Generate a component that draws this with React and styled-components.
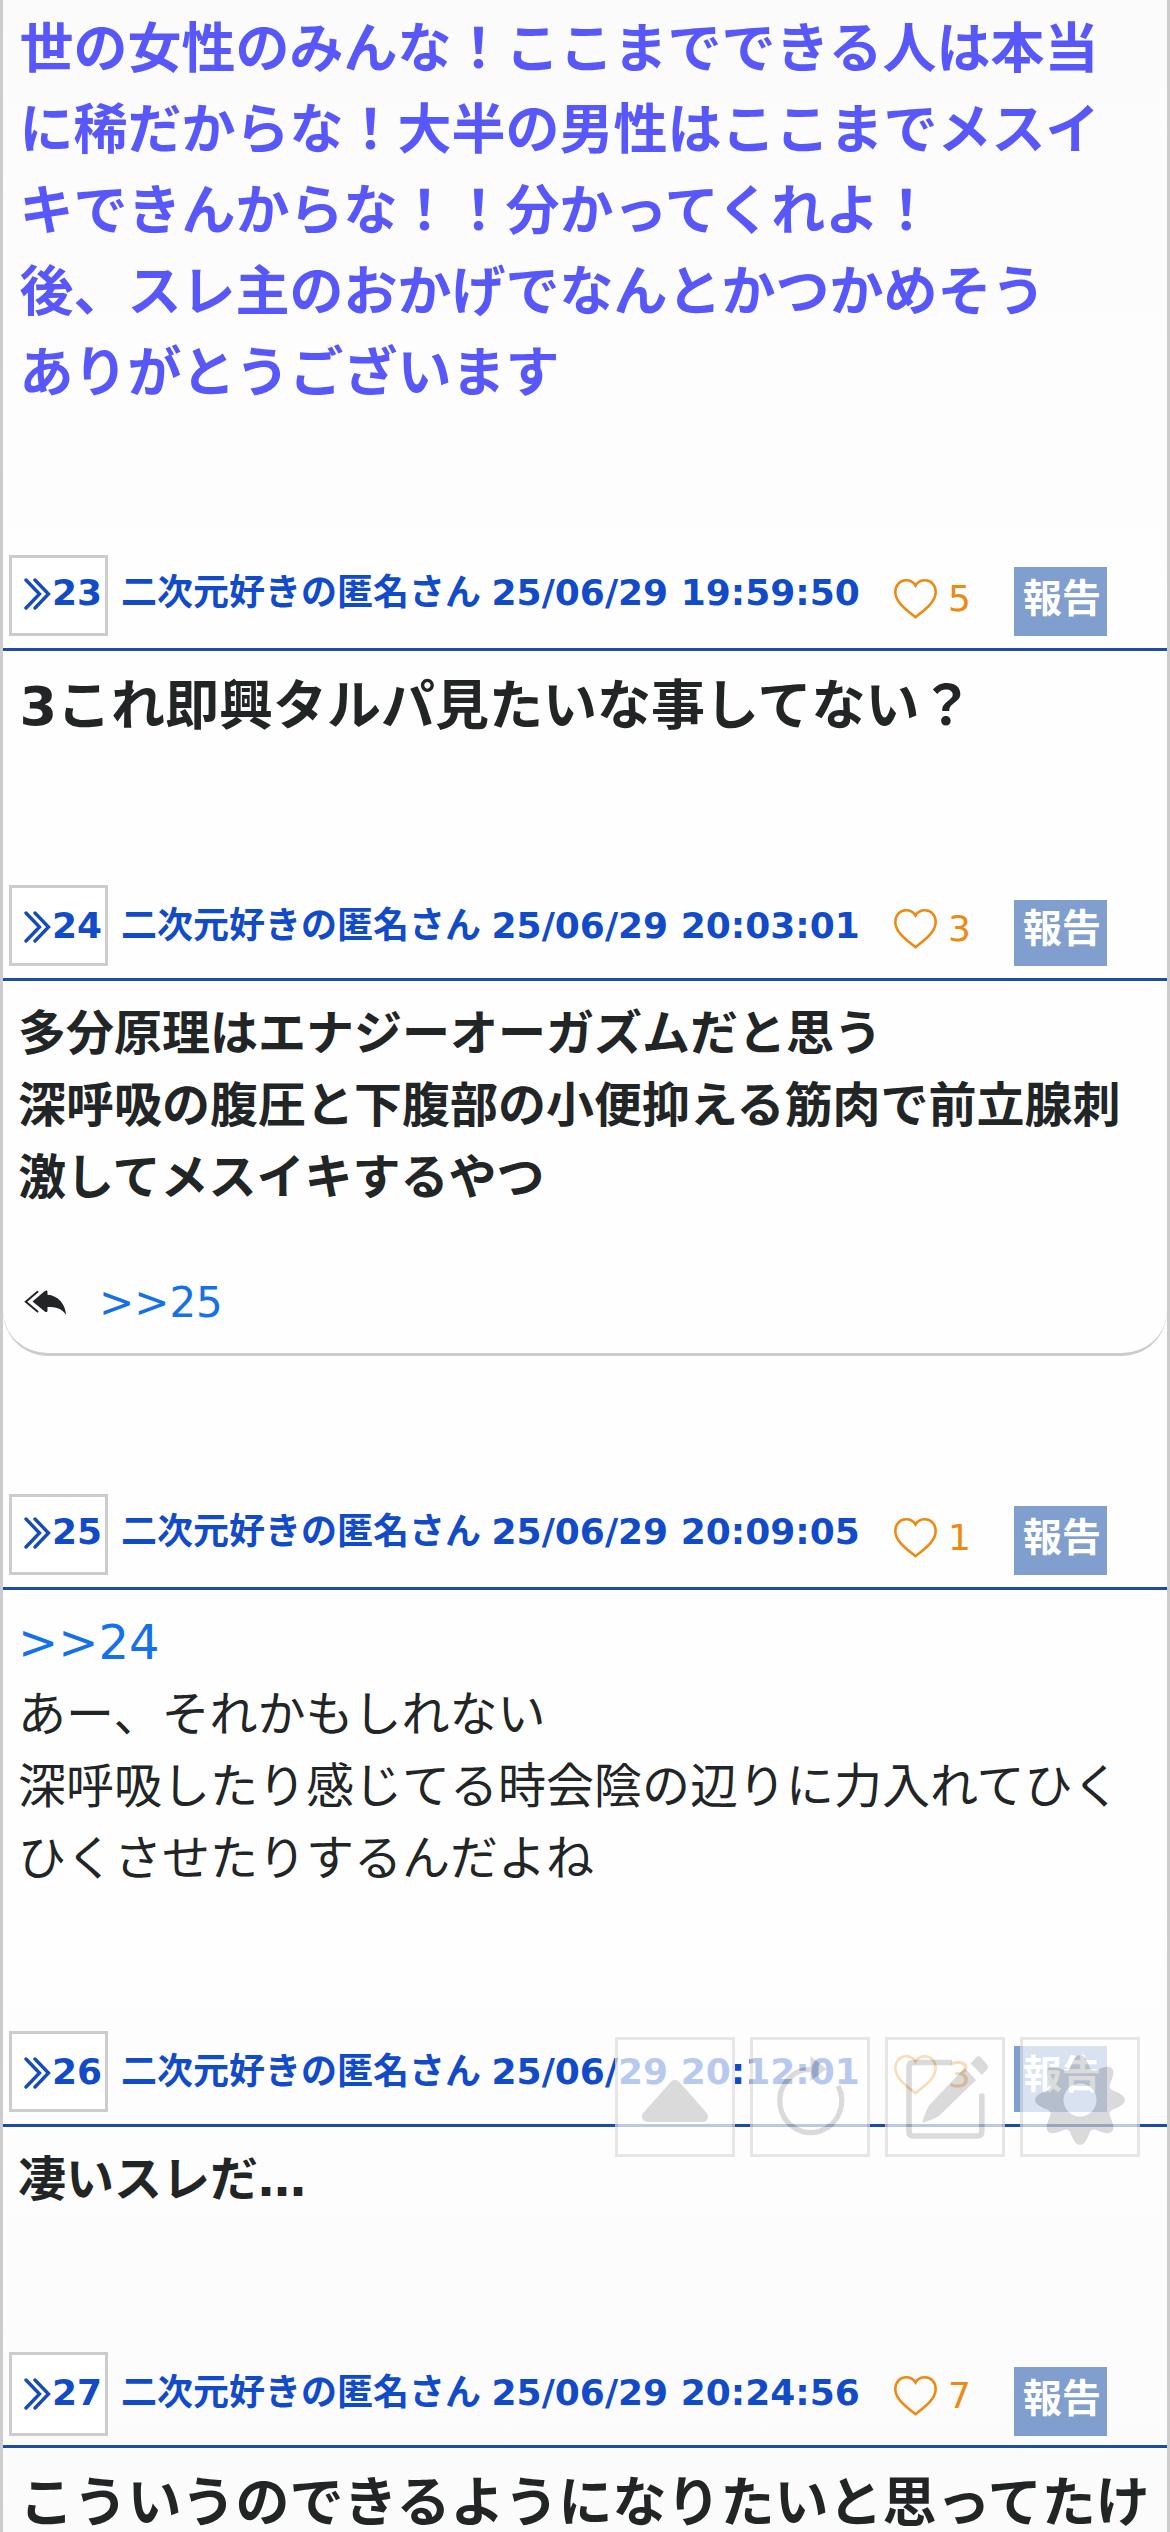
import styled, { createGlobalStyle } from "styled-components";

const posts = [
  {
    id: 23,
    date: "25/06/29 19:59:50",
    likes: 5,
    large: true,
    bold: true,
    drop: 0,
    report: { height: 69, pad: 5 },
    lines: ["3これ即興タルパ見たいな事してない？"],
  },
  {
    id: 24,
    date: "25/06/29 20:03:01",
    likes: 3,
    bold: true,
    drop: 3,
    report: { height: 66, pad: 2 },
    lines: [
      "多分原理はエナジーオーガズムだと思う",
      "深呼吸の腹圧と下腹部の小便抑える筋肉で前立腺刺",
      "激してメスイキするやつ",
    ],
    reply: 25,
  },
  {
    id: 25,
    date: "25/06/29 20:09:05",
    likes: 1,
    drop: 0,
    report: { height: 69, pad: 5 },
    anchor: 24,
    lines: [
      "あー、それかもしれない",
      "深呼吸したり感じてる時会陰の辺りに力入れてひく",
      "ひくさせたりするんだよね",
    ],
  },
  {
    id: 26,
    date: "25/06/29 20:12:01",
    likes: 3,
    bold: true,
    drop: 3,
    report: { height: 66, pad: 2 },
    lines: ["凄いスレだ…"],
  },
  {
    id: 27,
    date: "25/06/29 20:24:56",
    likes: 7,
    large: true,
    bold: true,
    drop: 3,
    tall: true,
    report: { height: 69, pad: 5 },
    lines: ["こういうのできるようになりたいと思ってたけ"],
  },
];

function gearPath() {
  let d = "";
  for (let a = 0; a < 360; a += 3) {
    const t = (a * Math.PI) / 180;
    const r = 38.5 + 6.5 * Math.cos(8 * t);
    const x = (60 + r * Math.cos(t)).toFixed(1);
    const y = (63 + r * Math.sin(t)).toFixed(1);
    d += `${a === 0 ? "M" : "L"}${x} ${y}`;
  }
  return d + "ZM76.5 63a16.5 16.5 0 1 0-33 0a16.5 16.5 0 1 0 33 0Z";
}

function Post({ post }) {
  return (
    <article>
      <PostHeader>
        <NumberBox $tall={post.tall} $drop={post.drop}>
          <svg width="27" height="32" viewBox="0 0 27 32">
            <path
              d="M2 2L15.5 16L2 30M11 2L24.5 16L11 30"
              fill="none"
              stroke="#164bb8"
              strokeWidth="3.4"
              strokeLinecap="round"
            />
          </svg>
          {post.id}
        </NumberBox>
        <PostInfo $drop={post.drop}>
          二次元好きの匿名さん <PostDate>{post.date}</PostDate>
        </PostInfo>
        <LikeButton>
          <svg width="43" height="40" viewBox="0 0 43 40">
            <path
              d="M21.5 38.2C12 30.5 1.3 23 1.3 13C1.3 6 6 1.3 12 1.3C16 1.3 19.5 3 21.5 6.5C23.5 3 27 1.3 31 1.3C37 1.3 41.7 6 41.7 13C41.7 23 31 30.5 21.5 38.2Z"
              fill="none"
              stroke="#ec8b14"
              strokeWidth="2.6"
            />
          </svg>
          <span>{post.likes}</span>
        </LikeButton>
        <ReportButton $height={post.report.height} $pad={post.report.pad} $tall={post.tall}>
          報告
        </ReportButton>
      </PostHeader>
      <PostBody $large={post.large} $bold={post.bold} $replied={post.reply}>
        {post.anchor && <Anchor>&gt;&gt;{post.anchor}</Anchor>}
        {post.lines.map((line) => (
          <p key={line}>{line}</p>
        ))}
        {post.reply && (
          <Replies>
            <svg width="43" height="26" viewBox="0 0 43 26">
              <path
                d="M13.5 1.8L1.8 11.7L13.5 21.5"
                fill="none"
                stroke="#222526"
                strokeWidth="2"
                strokeLinecap="round"
              />
              <path
                d="M8.5 11.5L20.5 1.2C22.5-.3 23.5.5 23.5 2V4.8C34 5.5 41.5 14 42 25C38 18.5 32 17 23.5 17V20.5C23.5 22.5 22 22.5 20.5 21.2Z"
                fill="#222526"
              />
            </svg>
            <a>&gt;&gt;{post.reply}</a>
          </Replies>
        )}
      </PostBody>
    </article>
  );
}

export default function App() {
  return (
    <>
      <GlobalStyle />
      <Thread>
        <FirstBody>
          <p>世の女性のみんな！ここまでできる人は本当</p>
          <p>に稀だからな！大半の男性はここまでメスイ</p>
          <p>キできんからな！！分かってくれよ！</p>
          <p>後、スレ主のおかげでなんとかつかめそう</p>
          <p>ありがとうございます</p>
        </FirstBody>
        {posts.map((post) => (
          <Post key={post.id} post={post} />
        ))}
      </Thread>
      <FloatingMenu>
        <MenuButton>
          <svg viewBox="0 0 120 120">
            <path
              d="M60 48.5L32.5 79.5H87.5Z"
              fill="#ccc"
              stroke="#ccc"
              strokeWidth="11"
              strokeLinejoin="round"
            />
          </svg>
        </MenuButton>
        <MenuButton>
          <svg viewBox="0 0 120 120">
            <path
              d="M88 49A31 31.5 0 1 1 62 32.5"
              fill="none"
              stroke="#ccc"
              strokeWidth="5.2"
            />
            <path d="M60.5 19L76.5 32L60.5 44Z" fill="#ccc" />
          </svg>
        </MenuButton>
        <MenuButton>
          <svg viewBox="0 0 120 120">
            <path
              d="M67 25.5H28.5Q24 25.5 24 30V94.5Q24 99 28.5 99H92Q96.8 99 96.8 94.5V59"
              fill="none"
              stroke="#ccc"
              strokeWidth="5.6"
            />
            <circle cx="96.8" cy="59" r="2.8" fill="#ccc" />
            <path
              d="M79.5 31L91 43L55 78Q52 81 38.5 85.5Q37 85.5 37.5 84Q41 74 44 68.5Z"
              fill="#ccc"
            />
            <path
              d="M85.5 26.5L91 20.5Q93.5 18 96 20.5L102 27.5Q104 30 102 32.5L97 38Z"
              fill="#ccc"
            />
          </svg>
        </MenuButton>
        <MenuButton>
          <svg viewBox="0 0 120 120">
            <path d={gearPath()} fill="#ccc" fillRule="evenodd" />
          </svg>
        </MenuButton>
      </FloatingMenu>
    </>
  );
}

const GlobalStyle = createGlobalStyle`
  * {
    box-sizing: border-box;
  }
  body {
    margin: 0;
    overflow: hidden;
    font-family: "DejaVu Sans", "Noto Sans CJK JP", sans-serif;
    color: #222526;
  }
  p {
    margin: 0;
    white-space: nowrap;
  }
  svg {
    display: block;
    flex-shrink: 0;
  }
`;

const Thread = styled.main`
  width: 1170px;
  height: 2532px;
  overflow: hidden;
  border-left: 3px solid #ccc;
  border-right: 3px solid #ccc;
  background: linear-gradient(#fbfbfb, #fefefe 25%, #fefefe 75%, #fbfbfb);
`;

const FirstBody = styled.section`
  height: 555px;
  padding: 9px 0 0 16.5px;
  font-size: 54px;
  line-height: 81px;
  font-weight: 700;
  color: #5757fa;
`;

const PostHeader = styled.header`
  display: flex;
  align-items: flex-start;
  height: 96px;
  padding-left: 6px;
  border-bottom: 3px solid #1b4ca6;
  color: #124bc8;
`;

const NumberBox = styled.div`
  display: flex;
  align-items: flex-start;
  width: 99px;
  height: ${(props) => (props.$tall ? 84 : 81)}px;
  padding: ${(props) => 20 + props.$drop}px 0 0 12px;
  gap: 1px;
  border: 3px solid #ccc;
  background: #fff;
  font-size: 36px;
  font-weight: 700;
  line-height: 30px;
`;

const PostInfo = styled.span`
  width: 773px;
  margin-left: 13px;
  padding-top: ${(props) => 17 + props.$drop}px;
  font-size: 36px;
  font-weight: 700;
  line-height: 42px;
  white-space: nowrap;
`;

const PostDate = styled.time`
  margin-left: -2px;
`;

const LikeButton = styled.div`
  display: flex;
  width: 120px;
  padding-top: 24px;
  gap: 11px;
  color: #ec8b14;
  font-size: 36px;
  line-height: 40px;
`;

const ReportButton = styled.div`
  width: 93px;
  height: ${(props) => props.$height}px;
  margin-top: ${(props) => (props.$tall ? 84 : 81) - props.$height}px;
  padding-left: 9px;
  background: #819fce;
  color: #fff;
  font-size: 39px;
  font-weight: 700;
  line-height: ${(props) => 54 + props.$pad * 2}px;
  white-space: nowrap;
`;

const PostBody = styled.section`
  padding: ${(props) => (props.$large ? "15px 0 1px 16.5px" : "16px 0 0 15px")};
  margin-bottom: ${(props) => (props.$replied ? 138 : 137)}px;
  font-size: ${(props) => (props.$large ? 54 : 48)}px;
  line-height: ${(props) => (props.$large ? 81 : 72)}px;
  font-weight: ${(props) => (props.$bold ? 700 : 400)};
  ${(props) =>
    props.$replied &&
    `
    height: 375px;
    border-bottom: 3px solid #ccc;
    border-radius: 0 0 45px 45px;
  `}
`;

const Anchor = styled.p`
  color: #1571ea;
`;

const Replies = styled.div`
  display: flex;
  align-items: center;
  height: 60px;
  margin-top: 60px;
  padding-left: 6px;
  gap: 32px;
  font-size: 42px;
  font-weight: 400;
  line-height: 60px;
  color: #1571ea;
`;

const FloatingMenu = styled.nav`
  position: absolute;
  top: 2037px;
  left: 615px;
  display: flex;
  gap: 15px;
`;

const MenuButton = styled.div`
  width: 120px;
  height: 120px;
  border: 3px solid #ddd;
  background: #fff;
  opacity: 0.7;
  svg {
    width: 120px;
    height: 120px;
    margin: -3px;
  }
`;
